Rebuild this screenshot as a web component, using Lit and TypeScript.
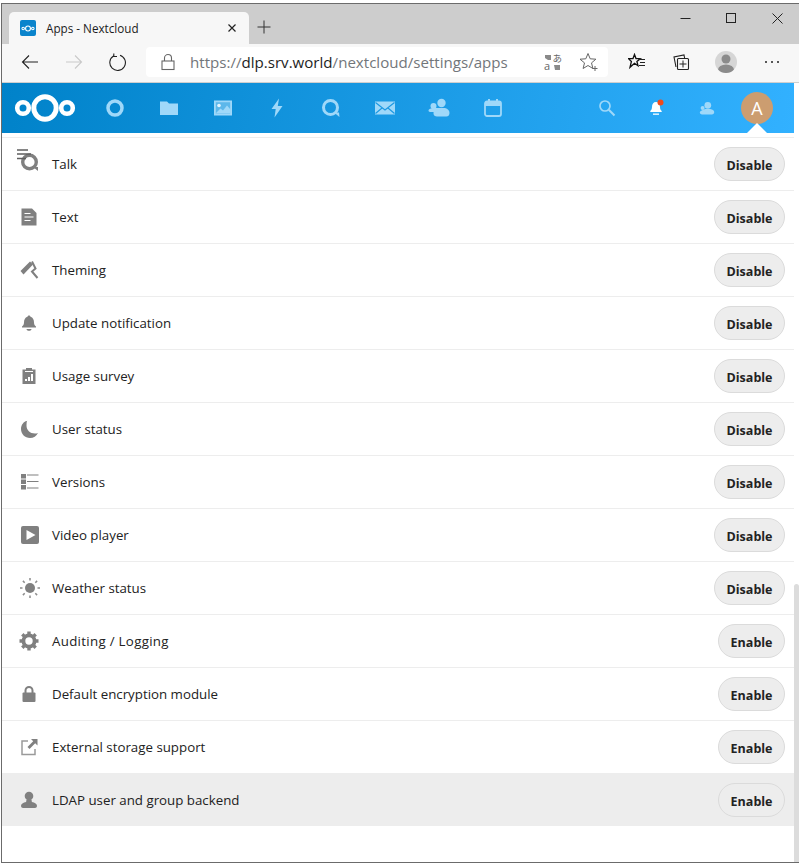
import { LitElement, html, css, svg } from "lit";
import { customElement } from "lit/decorators.js";

const logo = (c = "#fff") => svg`<g fill="none" stroke=${c}>
  <circle cx="30" cy="14" r="11.2" stroke-width="5"/>
  <circle cx="8" cy="14" r="5.8" stroke-width="4.6"/>
  <circle cx="52" cy="14" r="5.8" stroke-width="4.6"/></g>`;

const G = "#808080";

const rowIcons: Record<string, unknown> = {
  talk: svg`<svg width="28" height="30" viewBox="0 0 28 30">
    <circle cx="14.500" cy="13" r="6.800" fill="none" stroke=${G} stroke-width="3.400"/>
    <path d="M18 18h5v4z" fill=${G}/>
    <path d="M2 1h11M2 5h14M2 9.500h9" stroke="#5f5f5f" stroke-width="1.300" fill="none"/></svg>`,
  text: svg`<svg width="18" height="18" viewBox="0 0 18 18">
    <path d="M1.500 .5h10.500l4.500 4.500v12.500H1.500z" fill=${G}/>
    <path d="M4.500 5.500h6M4.500 9h9M4.500 12.500h6" stroke="#fff" stroke-width="1.200"/></svg>`,
  theming: svg`<svg width="20" height="20" viewBox="0 0 20 20">
    <path d="M1.500 11L11 1.500l3 3L4.500 14.500z" fill=${G}/>
    <path d="M13 1.500l3.500 7-3.500 3 5.500 6.500" fill="none" stroke=${G} stroke-width="2"/></svg>`,
  bell: svg`<svg width="16" height="18" viewBox="0 0 16 18">
    <path d="M8 1.500c.9 0 1.400.6 1.500 1.300C12 3.500 13 6 13 8.500c0 2 .8 3 2 4v1H1v-1c1.200-1 2-2 2-4 0-2.500 1-5 3.500-5.700.1-.7.6-1.300 1.500-1.300z" fill=${G}/>
    <path d="M5.500 15h5c0 1-1 1.800-2.500 1.800S5.500 16 5.500 15z" fill=${G}/></svg>`,
  survey: svg`<svg width="16" height="18" viewBox="0 0 16 18">
    <path d="M1.500 2.500H5V1h6v1.500h3.500V17h-13z" fill=${G}/>
    <path d="M4 14v-2h2v2zM7 14V10h2v4zM10 14V7h2v7z" fill="#fff"/>
    <path d="M4 4.500h8" stroke="#fff" stroke-width="1"/></svg>`,
  moon: svg`<svg width="20" height="20" viewBox="-1 0 20 20">
    <path d="M7.500 1.500C3.500 2.500 1 6 1 10c0 5 4 9 9 9 3.500 0 6.500-2 8-5-1 .5-2 .6-3 .6-5 0-8.500-3.500-8.500-8 0-2 .2-3.600.5-5.100z" fill=${G}/></svg>`,
  versions: svg`<svg width="20" height="18" viewBox="-1 0 20 18">
    <path d="M1 1h5v4.500H1zM1 6.500h5V11H1zM1 12h5v4.500H1z" fill=${G}/>
    <path d="M7 2h11.500M7 8.500h11.500M7 15h11.500" stroke=${G} stroke-width="1.200"/></svg>`,
  video: svg`<svg width="20" height="20" viewBox="-1 0 20 20">
    <rect x="1" y="1" width="18" height="18" rx="2" fill=${G}/>
    <path d="M6.500 5l9 5-9 5z" fill="#fff"/></svg>`,
  sun: svg`<svg width="22" height="22" viewBox="-1 0 22 22">
    <circle cx="11" cy="11" r="5" fill=${G}/>
    <g stroke="#8c8c8c" stroke-width="1.500">
    <path d="M11 1v2.500M11 18.500V21M1 11h2.500M18.500 11H21M3.900 3.900l1.800 1.800M16.300 16.300l1.800 1.800M3.900 18.100l1.800-1.800M16.300 5.700l1.800-1.800"/></g></svg>`,
  gear: svg`<svg width="20" height="20" viewBox="0 0 20 20">
    <circle cx="10" cy="10" r="5.600" fill="none" stroke=${G} stroke-width="3.800"/>
    <g stroke=${G} stroke-width="3.400"><path d="M10 .5v3M10 16.500v3M.5 10h3M16.500 10h3M3.300 3.300l2.100 2.100M14.600 14.600l2.100 2.100M3.300 16.700l2.100-2.100M14.600 5.400l2.100-2.100"/></g></svg>`,
  lock: svg`<svg width="16" height="18" viewBox="0 0 16 18">
    <path d="M4.500 8V5.500a3.500 3.500 0 0 1 7 0V8" fill="none" stroke=${G} stroke-width="2"/>
    <rect x="1.500" y="7.500" width="13" height="9.500" rx="1" fill=${G}/></svg>`,
  external: svg`<svg width="18" height="18" viewBox="0 0 18 18">
    <path d="M8 3H2v13.500h13V11" fill="none" stroke="#9a9a9a" stroke-width="1.500"/>
    <path d="M11 1h6.500v6.500L15.200 5.300 9.500 11 7.500 9l5.700-5.700z" fill=${G}/></svg>`,
  user: svg`<svg width="18" height="18" viewBox="0 0 18 18">
    <circle cx="9" cy="5" r="4.300" fill=${G}/>
    <path d="M6.500 8.500h5l.4 2.500c3 .6 5.100 2 5.100 3.800 0 1.400-1 2.200-2 2.200H3c-1 0-2-.8-2-2.200 0-1.800 2.100-3.200 5.100-3.800z" fill=${G}/></svg>`,
};

const NAV = "#9fd8f9";
const navIcons = [
  svg`<svg width="20" height="20" viewBox="0 0 20 20"><circle cx="10" cy="10" r="7" fill="none" stroke=${NAV} stroke-width="3.500"/></svg>`,
  svg`<svg width="20" height="20" viewBox="0 0 20 20"><path d="M1 3.500h7l2 2h9V17H1z" fill=${NAV}/></svg>`,
  svg`<svg width="20" height="20" viewBox="0 0 20 20"><path fill-rule="evenodd" d="M1 2.500h18v15H1zM2.800 4.200v11.600h14.400V4.200z" fill=${NAV}/><rect x="2" y="3.500" width="16" height="13" fill=${NAV} opacity=".55"/><path d="M2.500 15.500l5-5 2.500 2 4-5 3.500 4v4z" fill=${NAV}/><circle cx="6" cy="7.500" r="1.800" fill="#e4f4fe"/></svg>`,
  svg`<svg width="20" height="20" viewBox="0 0 20 20"><path d="M12 0.500L4.500 11h4.200l-1.200 8.500L15.500 8h-4.700z" fill=${NAV}/></svg>`,
  svg`<svg width="20" height="20" viewBox="0 0 20 20"><circle cx="9.500" cy="9.500" r="7" fill="none" stroke=${NAV} stroke-width="3"/><path d="M13 14.500l5 0 .5 4.500z" fill=${NAV}/></svg>`,
  svg`<svg width="22" height="20" viewBox="0 0 22 20"><rect x="1" y="3.500" width="20" height="13" fill=${NAV}/><path d="M1.500 4.500L11 12l9.500-7.500M1.500 15.500l6.500-5.500M20.500 15.500l-6.500-5.500" fill="none" stroke="#1a98e2" stroke-width="1.100"/></svg>`,
  svg`<svg width="22" height="20" viewBox="0 0 22 20"><circle cx="13.500" cy="5" r="4.200" fill=${NAV}/><circle cx="5.500" cy="8" r="3" fill=${NAV}/><path d="M8 10h9c3 1 4.500 2.500 4.500 5 0 2.500-1.500 3.500-3 3.500H9c-2 0-3.500-1-3.500-3 0-.5 0-.8.100-1.500H2c-1 0-1.500-.8-1.500-1.500 0-1.200 1.500-2 4-2.500h4z" fill=${NAV}/></svg>`,
  svg`<svg width="20" height="20" viewBox="0 0 20 20"><rect x="2" y="3.500" width="16" height="14.500" rx="2" fill="none" stroke=${NAV} stroke-width="1.800"/><rect x="2" y="3.500" width="16" height="4.500" fill=${NAV}/><path d="M6 1v4M14 1v4" stroke=${NAV} stroke-width="2"/></svg>`,
];

interface App { name: string; icon: string; action: string; hover?: boolean; wide?: boolean }
const apps: App[] = [
  { name: "Talk", icon: "talk", action: "Disable" },
  { name: "Text", icon: "text", action: "Disable" },
  { name: "Theming", icon: "theming", action: "Disable" },
  { name: "Update notification", icon: "bell", action: "Disable" },
  { name: "Usage survey", icon: "survey", action: "Disable" },
  { name: "User status", icon: "moon", action: "Disable" },
  { name: "Versions", icon: "versions", action: "Disable" },
  { name: "Video player", icon: "video", action: "Disable" },
  { name: "Weather status", icon: "sun", action: "Disable" },
  { name: "Auditing / Logging", icon: "gear", action: "Enable", wide: true },
  { name: "Default encryption module", icon: "lock", action: "Enable" },
  { name: "External storage support", icon: "external", action: "Enable" },
  { name: "LDAP user and group backend", icon: "user", action: "Enable", hover: true },
];

@customElement("app-root")
export class AppRoot extends LitElement {
  static styles = css`
    :host { display: block; width: 799px; height: 864px; background: #fff; overflow: hidden; font-family: "Open Sans", sans-serif; }
    * { box-sizing: border-box; }
    .window { height: 860px; margin: 3px 0 1px 1px; border-top: 1px solid #6b6b6b; border-left: 1px solid #6b6b6b; border-bottom: 1px solid #6b6b6b; display: flex; flex-direction: column; background: #fff; }
    .tabstrip { height: 40px; flex: none; background: #cdcdcd; display: flex; align-items: flex-end; padding-left: 7px; }
    .tab { width: 240px; height: 32px; background: #f7f7f7; border-radius: 5px 5px 0 0; display: flex; align-items: center; padding: 0 12px 0 11px; font-size: 11.7px; color: #1c1c1c; }
    .favicon { width: 16px; height: 16px; background: #0a84cc; border-radius: 2px; display: flex; align-items: center; justify-content: center; margin-right: 10px; }
    .tab .title { flex: 1; }
    .newtab { width: 30px; height: 32px; padding-bottom: 2px; display: flex; align-items: center; justify-content: center; }
    .spacer { flex: 1; }
    .winctl { display: flex; align-self: flex-start; }
    .winctl div { width: 46px; height: 28px; padding-left: 2px; display: flex; align-items: center; justify-content: center; }
    .toolbar { height: 39px; flex: none; background: #f7f7f7; border-bottom: 1px solid #cfcfcf; display: flex; align-items: center; padding: 0 0 3px 6px; }
    .tb { width: 44px; height: 30px; flex: none; display: flex; align-items: center; justify-content: center; }
    .tb.profile { margin-left: 1px; }
    .tb.more { margin-left: 2px; }
    .address { width: 462px; height: 30px; margin-left: 6px; background: #fff; border-radius: 4px; display: flex; align-items: center; padding-left: 15px; font-size: 15.1px; color: #72767a; }
    .address .url { margin-left: 15px; flex: 1; white-space: nowrap; }
    .address b { font-weight: 400; color: #1d1d1d; }
    .translate { margin-right: 16px; overflow: visible; }
    .addstar { margin-right: 9px; }
    .tools { display: flex; margin-left: 7px; }
    .header { height: 50px; flex: none; width: 792px; background: linear-gradient(100deg, #0082c9 0%, #32b1ff 100%); display: flex; align-items: center; padding-left: 13px; position: relative; }
    .logo { width: 60px; height: 28px; margin-right: 13px; }
    .logo svg { display: block; overflow: visible; }
    .nav { display: flex; }
    .nav div { width: 54px; height: 50px; display: flex; align-items: center; justify-content: center; }
    .right { margin-left: auto; display: flex; margin-right: 12px; }
    .right .hi { width: 50px; height: 50px; display: flex; align-items: center; justify-content: center; position: relative; }
    .avatar { width: 32px; height: 32px; border-radius: 50%; background: #cc9d70; color: #fff; font-size: 18px; display: flex; align-items: center; justify-content: center; }
    .caret { position: absolute; left: 15px; bottom: 0; width: 0; height: 0; border-left: 10px solid transparent; border-right: 10px solid transparent; border-bottom: 10px solid #fff; }
    .main { flex: 1; display: flex; min-height: 0; }
    .list { width: 792px; padding-top: 4px; }
    .row { height: 53px; border-top: 1px solid #ededed; display: flex; align-items: center; padding: 0 9px 0 0; font-size: 13.3px; color: #222; }
    .row.hover { background: #ededed; }
    .icon { width: 50px; flex: none; display: flex; align-items: center; justify-content: center; padding-left: 4px; }
    .icon svg { display: block; }
    .name { flex: 1; }
    .name.wide { letter-spacing: 0.3px; }
    .btn { height: 34px; padding: 2px 11.5px 0; border: 1px solid #dbdbdb; border-radius: 17px; background: #ededed; font: 700 12.5px "Open Sans", sans-serif; color: #222; display: flex; align-items: center; }
    .scroll { width: 5px; flex: none; margin-top: 451px; background: #dcdcdc; border-radius: 3px 3px 0 0; }
  `;

  render() {
    return html`<div class="window">
      <div class="tabstrip">
        <div class="tab">
          <div class="favicon"><svg width="14" height="7" viewBox="-2 2 64 24">${logo()}</svg></div>
          <span class="title">Apps - Nextcloud</span>
          <svg width="10" height="10" viewBox="0 0 10 10"><path d="M1.500 1.500l7 7M8.500 1.500l-7 7" stroke="#222" stroke-width="1.200"/></svg>
        </div>
        <div class="newtab"><svg width="14" height="14" viewBox="0 0 14 14"><path d="M7 .5v13M.5 7h13" stroke="#333" stroke-width="1"/></svg></div>
        <div class="spacer"></div>
        <div class="winctl">
          <div><svg width="11" height="11" viewBox="0 0 11 11"><path d="M.5 5.500h10" stroke="#222"/></svg></div>
          <div><svg width="11" height="11" viewBox="0 0 11 11"><rect x=".5" y=".5" width="9" height="9" fill="none" stroke="#222"/></svg></div>
          <div><svg width="11" height="11" viewBox="0 0 11 11"><path d="M.5.500l10 10M10.500.500l-10 10" stroke="#222"/></svg></div>
        </div>
      </div>
      <div class="toolbar">
        <div class="tb"><svg width="18" height="16" viewBox="0 0 18 16"><path d="M17 8H1.500M8 1.500L1.500 8 8 14.500" fill="none" stroke="#222" stroke-width="1.100"/></svg></div>
        <div class="tb"><svg width="18" height="16" viewBox="0 0 18 16"><path d="M1 8h15.500M10 1.500L16.500 8 10 14.500" fill="none" stroke="#c9c9c9" stroke-width="1.100"/></svg></div>
        <div class="tb"><svg width="18" height="18" viewBox="0 0 18 18"><path d="M11 2.200A7.800 7.800 0 1 1 4.500 3M4.800 .5V3.500H8" fill="none" stroke="#222" stroke-width="1.100"/></svg></div>
        <div class="address">
          <svg width="14" height="18" viewBox="0 0 14 18"><path d="M3.500 8V5a3.500 3.500 0 0 1 7 0v3" fill="none" stroke="#666" stroke-width="1.100"/><rect x="1" y="8" width="12" height="8.500" fill="none" stroke="#666" stroke-width="1.100"/></svg>
          <span class="url">https://<b>dlp.srv.world</b>/nextcloud/settings/apps</span>
          <svg class="translate" width="20" height="20" viewBox="0 0 20 20"><path d="M2 3h6v5H5l-3-2zM11 13h6v5h-5z" fill="#8a8a8a"/><text x="1" y="18" font-size="11" fill="#666" font-family="Open Sans">a</text><text x="9.500" y="10" font-size="9.500" fill="#666" font-family="Noto Sans CJK JP">あ</text></svg>
          <svg class="addstar" width="20" height="20" viewBox="0 0 20 20"><path d="M9 1.500l2.200 5.300 5.700.4-4.400 3.700 1.400 5.600L9 13.500l-4.900 3 1.400-5.600L1 7.200l5.800-.4z" fill="none" stroke="#666" stroke-width="1"/><path d="M13.500 16.500h5M16 14v5" stroke="#666"/></svg>
        </div>
        <div class="tools">
          <div class="tb"><svg width="18" height="18" viewBox="0 0 18 18"><path d="M6.500 1.500l1.500 4 4.300.2-3.400 2.800 1.100 4.200-3.500-2.400-4.500 4 1.400-5.800L.5 5.700l4.500-.2z" fill="#f7f7f7" stroke="#111" stroke-width="1.300"/><path d="M11 6.500h6M12 9.500h5M11 12.500h6" stroke="#222"/></svg></div>
          <div class="tb"><svg width="18" height="18" viewBox="0 0 18 18"><path d="M4 14L2 4l10-2 .6 3" fill="none" stroke="#222" stroke-width="1.100"/><rect x="5.500" y="5.500" width="11" height="11" rx="1" fill="#f7f7f7" stroke="#222" stroke-width="1.100"/><path d="M11 7.500v7M7.500 11h7" stroke="#222"/></svg></div>
          <div class="tb profile"><svg width="22" height="22" viewBox="0 0 22 22"><defs><clipPath id="pc"><circle cx="11" cy="11" r="11"/></clipPath></defs><circle cx="11" cy="11" r="11" fill="#d6d6d6"/><g clip-path="url(#pc)" fill="#8b8b8b"><circle cx="11" cy="8" r="4.500"/><ellipse cx="11" cy="19" rx="8" ry="5.500"/></g></svg></div>
          <div class="tb more"><svg width="16" height="4" viewBox="0 0 16 4"><circle cx="2" cy="2" r="1" fill="#222"/><circle cx="8" cy="2" r="1" fill="#222"/><circle cx="14" cy="2" r="1" fill="#222"/></svg></div>
        </div>
      </div>
      <div class="header">
        <div class="logo"><svg width="60" height="28" viewBox="0 0 60 28">${logo()}</svg></div>
        <div class="nav">${navIcons.map((i) => html`<div>${i}</div>`)}</div>
        <div class="right">
          <div class="hi"><svg width="18" height="18" viewBox="0 0 18 18"><circle cx="7" cy="7" r="5" fill="none" stroke=${NAV} stroke-width="1.700"/><path d="M10.800 10.800l5.700 5.700" stroke=${NAV} stroke-width="2"/></svg></div>
          <div class="hi"><svg width="20" height="20" viewBox="0 0 20 20"><path d="M9 4c2.600 0 4 2 4 5 0 2 .7 3 1.700 4v1H3.300v-1C4.300 12 5 11 5 9c0-3 1.400-5 4-5z" fill="#fff"/><path d="M6 15.500h6v1.300H6z" fill="#fff"/><circle cx="13.500" cy="4.500" r="3" fill="#f24a1c"/></svg></div>
          <div class="hi"><svg width="16" height="15" viewBox="0 0 20 18"><circle cx="11" cy="5" r="4.200" fill=${NAV}/><circle cx="4.500" cy="8.500" r="2.500" fill=${NAV}/><path d="M8 9.500h6c3.500.8 5 2 5 4 0 2-1 3-3 3H5c-2 0-4-.5-4-2.500 0-1.500 1.500-2.500 7-4.500z" fill=${NAV}/></svg></div>
          <div class="hi"><div class="avatar">A</div><div class="caret"></div></div>
        </div>
      </div>
      <div class="main">
        <div class="list">
          ${apps.map((a) => html`<div class="row ${a.hover ? "hover" : ""}">
            <div class="icon">${rowIcons[a.icon]}</div>
            <div class="name ${a.wide ? "wide" : ""}">${a.name}</div>
            <div class="btn">${a.action}</div>
          </div>`)}
        </div>
        <div class="scroll"></div>
      </div>
    </div>`;
  }
}
